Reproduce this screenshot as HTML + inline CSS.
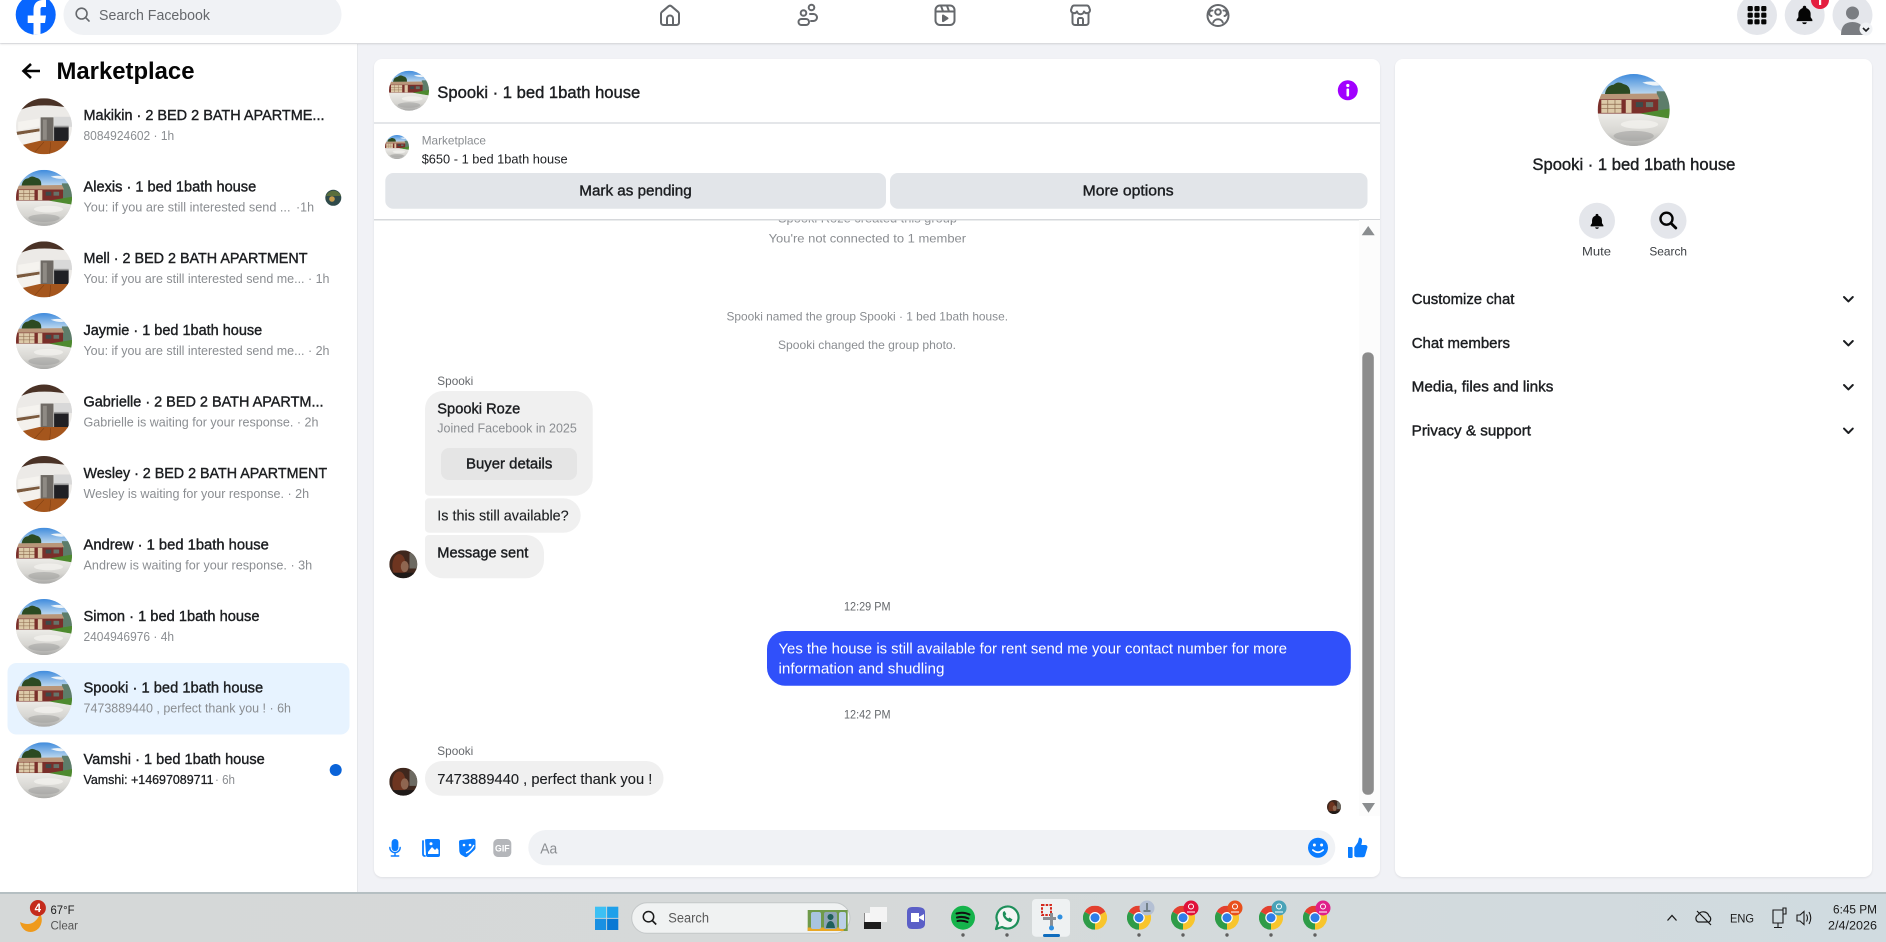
<!DOCTYPE html>
<html lang="en"><head><meta charset="utf-8"><title>Marketplace</title>
<style>
html,body{margin:0;padding:0;width:1886px;height:942px;overflow:hidden;background:#f1f2f6;font-family:"Liberation Sans",sans-serif}
.p{position:absolute;background:#fff}
svg{position:absolute;left:0;top:0;filter:blur(.3px)}
text{font-family:"Liberation Sans",sans-serif}
.t{font-size:15px;fill:#1c1e21;stroke:#1c1e21;stroke-width:.4px}
.s{font-size:13px;fill:#8a8d91}
.m{font-size:15px;fill:#1c1e21;stroke:#1c1e21;stroke-width:.12px}
.c{font-size:12px;fill:#8a8d91}
.ic{fill:none;stroke:#65686c;stroke-width:2;stroke-linecap:round;stroke-linejoin:round}
</style></head><body>
<div class="p" style="left:0;top:44px;width:357px;height:849px;border-right:1px solid #e6e8eb"></div>
<div class="p" style="left:374px;top:59px;width:1006px;height:818px;border-radius:8px;box-shadow:0 1px 2px rgba(0,0,0,.08)"></div>
<div class="p" style="left:1395px;top:59px;width:477px;height:818px;border-radius:8px;box-shadow:0 1px 2px rgba(0,0,0,.08)"></div>
<div class="p" style="left:0;top:0;width:1886px;height:43px;box-shadow:0 1px 2px rgba(0,0,0,.14)"></div>
<div style="position:absolute;left:0;top:892px;width:1886px;height:50px;box-sizing:border-box;border-top:2px solid #b5bfc2;background:linear-gradient(90deg,#d5d8d8,#d6d9d9 45%,#d0dbe0)"></div>
<svg width="1886" height="942" viewBox="0 0 1886 942">
<defs>
<clipPath id="cc"><circle cx="50" cy="50" r="50"/></clipPath>
<linearGradient id="sky" x1="0" y1="0" x2="0" y2="1"><stop offset="0" stop-color="#3f8bdd"/><stop offset="1" stop-color="#c6def0"/></linearGradient>
<linearGradient id="drv" x1="0" y1="0" x2="0" y2="1"><stop offset="0" stop-color="#ecebe7"/><stop offset=".6" stop-color="#d6d5d1"/><stop offset="1" stop-color="#a9a9a7"/></linearGradient>
<symbol id="house" viewBox="0 0 100 100"><g clip-path="url(#cc)">
<rect width="100" height="100" fill="url(#drv)"/>
<rect width="100" height="30" fill="url(#sky)"/>
<path d="M62 12q14-4 30 2q-12 5-30-2z" fill="#eef4f8"/>
<path d="M10 28q2-12 12-13q6-6 14-1q10 2 9 14z" fill="#2c4a22"/>
<rect x="82" y="24" width="18" height="30" fill="#5d7d6a"/>
<path d="M0 28 L82 27 L86 35 L0 35Z" fill="#b99679"/>
<rect x="0" y="35" width="84" height="20" fill="#7a2f2a"/>
<rect x="5" y="36" width="28" height="18" fill="#dcc9a8"/>
<path d="M5 42h28M5 48h28M14 36v18M24 36v18" stroke="#8d6a4e" stroke-width="1"/>
<rect x="39" y="36" width="8" height="18" fill="#dcc6a6"/>
<rect x="53" y="39" width="10" height="7" fill="#3d4a4a"/><rect x="67" y="39" width="10" height="7" fill="#66736a"/>
<path d="M58 55 L100 48 V62 L78 59Z" fill="#4e8a2f"/>
<path d="M0 55 L60 55 L100 62 V100 H0Z" fill="url(#drv)"/>
<ellipse cx="58" cy="70" rx="26" ry="6" fill="#f2f1ee" opacity=".8"/>
<ellipse cx="50" cy="86" rx="28" ry="7" fill="#9e9e9c" opacity=".55"/>
</g></symbol>
<symbol id="kit" viewBox="0 0 100 100"><g clip-path="url(#cc)">
<rect width="100" height="100" fill="#eceae7"/>
<path d="M0 0H100V18Q60 10 30 14Q10 18 0 26Z" fill="#4a3226"/>
<path d="M4 42 L42 36 V50 L4 58Z" fill="#f5f3ef"/>
<path d="M0 60 L42 54 V59 L0 66Z" fill="#7b5a3e"/>
<path d="M0 66 L42 59 V76 L0 84Z" fill="#f4f1ec"/>
<rect x="44" y="34" width="23" height="44" fill="#6f6a65"/><rect x="48" y="38" width="7" height="36" fill="#8f8a84"/>
<rect x="68" y="33" width="32" height="18" fill="#d8d8d8"/>
<rect x="68" y="51" width="26" height="27" fill="#202024"/><rect x="68" y="49" width="26" height="3" fill="#9a9a9a"/>
<path d="M0 86 L42 76 H100 V100 H0Z" fill="#a5561d"/>
<path d="M30 100L50 78M60 100L62 78" stroke="#7f3f12" stroke-width="1"/>
</g></symbol>
<symbol id="wom" viewBox="0 0 100 100"><g clip-path="url(#cc)">
<rect width="100" height="100" fill="#3f271d"/>
<ellipse cx="35" cy="55" rx="24" ry="42" fill="#6e3520"/>
<ellipse cx="55" cy="58" rx="14" ry="20" fill="#8f6650"/>
<rect x="72" y="10" width="28" height="55" fill="#6d6a62"/>
<rect y="80" width="100" height="20" fill="#1f1a18"/>
</g></symbol>
<symbol id="chrome" viewBox="0 0 24 24">
<path d="M12 12L1.6 6A12 12 0 0 1 22.400 6Z" fill="#e3402f"/><path d="M12 12L22.400 6A12 12 0 0 1 12 24Z" fill="#f8c52c"/><path d="M12 12L12 24A12 12 0 0 1 1.6 6Z" fill="#2e9c48"/>
<circle cx="12" cy="12" r="5.7" fill="#fff"/><circle cx="12" cy="12" r="4.5" fill="#2f7de8"/>
</symbol>
<symbol id="bell" viewBox="0 0 24 24"><path d="M12 2a2 2 0 0 0-2 2v.5A7 7 0 0 0 5 11v4l-2 3v1.500h18V18l-2-3v-4a7 7 0 0 0-5-6.500V4a2 2 0 0 0-2-2zM9.300 21a2.800 2.800 0 0 0 5.400 0z" fill="#050505"/></symbol>
</defs>

<!-- NAV -->
<circle cx="35.700" cy="14.700" r="20" fill="#0866ff"/>
<path d="M33.500 34.700V23H27.700V15.500H33.500V10C33.500 3 37.500 0 43 0h3V7H42.500C41 7 40.500 8 40.500 9.500V15.500H46L45 23H40.500V34.700Z" fill="#fff"/>
<rect x="63.500" y="-6" width="278" height="41" rx="20" fill="#f0f2f5"/>
<g fill="none" stroke="#65686c" stroke-width="1.600"><circle cx="81.600" cy="13.600" r="5.400"/><path d="M85.600 17.600L89 21" stroke-linecap="round"/></g>
<text x="99" y="20" font-size="14.500" fill="#65686c" textLength="111" lengthAdjust="spacingAndGlyphs">Search Facebook</text>
<g class="ic" transform="translate(658,3)"><path d="M3 10.500Q3 9.600 4 8.800L10.600 3.200Q12 2.200 13.400 3.200L20 8.800Q21 9.600 21 10.500V19.500A2.500 2.500 0 0 1 18.500 22H5.500A2.500 2.500 0 0 1 3 19.500ZM9 22V15.500A3 3 0 0 1 15 15.500V22"/></g>
<g class="ic" transform="translate(796,3)"><circle cx="7.500" cy="10" r="2.800"/><rect x="2.500" y="16" width="10.500" height="6" rx="3"/><circle cx="15.500" cy="4.500" r="2.800"/><path d="M14 11h3.500a3.500 3.500 0 0 1 0 7H15"/></g>
<g class="ic" transform="translate(933,3)"><rect x="2.500" y="2.500" width="19" height="19.500" rx="4.500"/><path d="M2.500 8.500h19M8 2.800l2 5.500M14 2.800l2 5.500"/><path d="M10 12.500l4.500 2.800-4.500 2.800z" fill="#65686c"/></g>
<g class="ic" transform="translate(1068.500,3)"><path d="M4 10V19.500A2.500 2.500 0 0 0 6.500 22h11a2.500 2.500 0 0 0 2.500-2.500V10"/><path d="M2.500 7L3.500 4A2.500 2.500 0 0 1 6 2.500H18A2.500 2.500 0 0 1 20.500 4L21.500 7A3.200 3.200 0 0 1 15.500 8.500 3.600 3.600 0 0 1 8.500 8.500 3.200 3.200 0 0 1 2.500 7Z"/><path d="M9.500 22V16.500A1.500 1.500 0 0 1 11 15h2A1.500 1.500 0 0 1 14.500 16.500V22"/></g>
<g class="ic" transform="translate(1206,3)"><circle cx="12" cy="12.500" r="10.500"/><circle cx="12" cy="9" r="2.800"/><path d="M7.200 19.500A5 4.500 0 0 1 16.800 19.500"/><path d="M6.500 7.500A2.300 2.300 0 1 0 5.500 13M17.500 7.500A2.300 2.300 0 1 1 18.500 13"/></g>
<circle cx="1757" cy="15" r="20" fill="#e4e6eb"/><circle cx="1804.700" cy="15" r="20" fill="#e4e6eb"/><circle cx="1852.500" cy="15" r="20" fill="#e4e6eb"/>
<g fill="#050505"><rect x="1747.600" y="6" width="5.200" height="5.200" rx="1.200"/><rect x="1754.400" y="6" width="5.200" height="5.200" rx="1.200"/><rect x="1761.200" y="6" width="5.200" height="5.200" rx="1.200"/><rect x="1747.600" y="12.600" width="5.200" height="5.200" rx="1.200"/><rect x="1754.400" y="12.600" width="5.200" height="5.200" rx="1.200"/><rect x="1761.200" y="12.600" width="5.200" height="5.200" rx="1.200"/><rect x="1747.600" y="19.200" width="5.200" height="5.200" rx="1.200"/><rect x="1754.400" y="19.200" width="5.200" height="5.200" rx="1.200"/><rect x="1761.200" y="19.200" width="5.200" height="5.200" rx="1.200"/></g>
<use href="#bell" x="1794" y="4" width="21" height="21"/>
<circle cx="1820" cy="0" r="9" fill="#e41e3f"/><rect x="1819" y="0" width="2.200" height="5" fill="#fff"/>
<circle cx="1852.500" cy="13" r="6.500" fill="#7a7d82"/><path d="M1841 35Q1841 22 1852.500 22Q1864 22 1864 35Z" fill="#7a7d82"/>
<circle cx="1866" cy="29" r="6.500" fill="#f0f2f5"/><path d="M1863 28l3 3 3-3" fill="none" stroke="#1c1e21" stroke-width="1.600"/>

<!-- SIDEBAR -->
<path d="M40 71H24M31 64l-7.500 7 7.500 7" fill="none" stroke="#050505" stroke-width="2.600"/>
<text x="56.500" y="79" font-size="24" font-weight="700" fill="#050505" textLength="138" lengthAdjust="spacingAndGlyphs">Marketplace</text>
<rect x="7.500" y="663" width="342" height="71.500" rx="9" fill="#e7f3ff"/>

<use href="#kit" x="16" y="98.300" width="56" height="56"/>
<text class="t" x="83.500" y="120" textLength="241" lengthAdjust="spacingAndGlyphs">Makikin · 2 BED 2 BATH APARTME...</text>
<text class="s" x="83.500" y="140" textLength="90.700" lengthAdjust="spacingAndGlyphs">8084924602 · 1h</text>

<use href="#house" x="16" y="169.900" width="56" height="56"/>
<text class="t" x="83.500" y="191.700" textLength="172.700" lengthAdjust="spacingAndGlyphs">Alexis · 1 bed 1bath house</text>
<text class="s" x="83.500" y="211.700" textLength="207" lengthAdjust="spacingAndGlyphs">You: if you are still interested send ...</text>
<text class="s" x="296" y="211.700" textLength="18" lengthAdjust="spacingAndGlyphs">·1h</text>
<circle cx="333.300" cy="197.800" r="8" fill="#2f4a4a"/><path d="M326 196a8 8 0 0 1 15 0z" fill="#5a6e3c"/><circle cx="332" cy="199" r="2.800" fill="#c69a4c"/>

<use href="#kit" x="16" y="241.400" width="56" height="56"/>
<text class="t" x="83.500" y="263.200" textLength="224" lengthAdjust="spacingAndGlyphs">Mell · 2 BED 2 BATH APARTMENT</text>
<text class="s" x="83.500" y="283.200" textLength="246" lengthAdjust="spacingAndGlyphs">You: if you are still interested send me... · 1h</text>

<use href="#house" x="16" y="313" width="56" height="56"/>
<text class="t" x="83.500" y="334.800" textLength="178.700" lengthAdjust="spacingAndGlyphs">Jaymie · 1 bed 1bath house</text>
<text class="s" x="83.500" y="354.800" textLength="246" lengthAdjust="spacingAndGlyphs">You: if you are still interested send me... · 2h</text>

<use href="#kit" x="16" y="384.500" width="56" height="56"/>
<text class="t" x="83.500" y="406.300" textLength="240" lengthAdjust="spacingAndGlyphs">Gabrielle · 2 BED 2 BATH APARTM...</text>
<text class="s" x="83.500" y="426.300" textLength="235" lengthAdjust="spacingAndGlyphs">Gabrielle is waiting for your response. · 2h</text>

<use href="#kit" x="16" y="456" width="56" height="56"/>
<text class="t" x="83.500" y="477.800" textLength="243.600" lengthAdjust="spacingAndGlyphs">Wesley · 2 BED 2 BATH APARTMENT</text>
<text class="s" x="83.500" y="497.800" textLength="225.600" lengthAdjust="spacingAndGlyphs">Wesley is waiting for your response. · 2h</text>

<use href="#house" x="16" y="527.700" width="56" height="56"/>
<text class="t" x="83.500" y="549.400" textLength="185.300" lengthAdjust="spacingAndGlyphs">Andrew · 1 bed 1bath house</text>
<text class="s" x="83.500" y="569.400" textLength="228.700" lengthAdjust="spacingAndGlyphs">Andrew is waiting for your response. · 3h</text>

<use href="#house" x="16" y="599" width="56" height="56"/>
<text class="t" x="83.500" y="621" textLength="176" lengthAdjust="spacingAndGlyphs">Simon · 1 bed 1bath house</text>
<text class="s" x="83.500" y="641" textLength="90.500" lengthAdjust="spacingAndGlyphs">2404946976 · 4h</text>

<use href="#house" x="16" y="670.700" width="56" height="56"/>
<text class="t" x="83.500" y="692.500" textLength="179.700" lengthAdjust="spacingAndGlyphs">Spooki · 1 bed 1bath house</text>
<text class="s" x="83.500" y="712.500" textLength="207.500" lengthAdjust="spacingAndGlyphs">7473889440 , perfect thank you ! · 6h</text>

<use href="#house" x="16" y="742.300" width="56" height="56"/>
<text class="t" x="83.500" y="764" textLength="181.300" lengthAdjust="spacingAndGlyphs">Vamshi · 1 bed 1bath house</text>
<text x="83.500" y="784" font-size="13" fill="#1c1e21" stroke="#1c1e21" stroke-width=".3" textLength="130" lengthAdjust="spacingAndGlyphs">Vamshi: +14697089711</text>
<text class="s" x="215" y="784" textLength="20" lengthAdjust="spacingAndGlyphs">· 6h</text>
<circle cx="335.700" cy="770" r="6" fill="#0a63d8"/>

<!-- CHAT -->
<text class="c" x="778" y="222.500" textLength="179" lengthAdjust="spacingAndGlyphs">Spooki Roze created this group</text>
<rect x="374" y="124" width="1006" height="95" fill="#fff"/>
<rect x="374" y="219" width="1006" height="1.500" fill="#d6d8db"/>
<rect x="374" y="122" width="1006" height="2" fill="#e4e6e9"/>
<use href="#house" x="389" y="70.700" width="40" height="40"/>
<text x="437.300" y="98" font-size="16.500" fill="#1c1e21" stroke="#1c1e21" stroke-width=".4" textLength="203" lengthAdjust="spacingAndGlyphs">Spooki · 1 bed 1bath house</text>
<circle cx="1347.800" cy="90.300" r="10" fill="#a100ff"/><circle cx="1347.800" cy="85.500" r="1.600" fill="#fff"/><rect x="1346.500" y="88.500" width="2.600" height="8" rx="1" fill="#fff"/>
<use href="#house" x="385" y="135" width="24" height="24"/>
<text x="421.700" y="144.300" font-size="12" fill="#8a8d91" textLength="64.300" lengthAdjust="spacingAndGlyphs">Marketplace</text>
<text x="421.700" y="163.300" font-size="13" fill="#1c1e21" textLength="146" lengthAdjust="spacingAndGlyphs">$650 - 1 bed 1bath house</text>
<rect x="385.300" y="173" width="500.700" height="35.700" rx="8" fill="#e2e5e9"/>
<rect x="890" y="173" width="477.500" height="35.700" rx="8" fill="#e2e5e9"/>
<text class="t" x="579.300" y="195.700" textLength="112.400" lengthAdjust="spacingAndGlyphs">Mark as pending</text>
<text class="t" x="1082.600" y="195.700" textLength="91" lengthAdjust="spacingAndGlyphs">More options</text>

<text class="c" x="768.600" y="242.700" textLength="197.500" lengthAdjust="spacingAndGlyphs">You're not connected to 1 member</text>
<text class="c" x="726.500" y="320.500" textLength="281.500" lengthAdjust="spacingAndGlyphs">Spooki named the group Spooki · 1 bed 1bath house.</text>
<text class="c" x="778" y="349" textLength="178" lengthAdjust="spacingAndGlyphs">Spooki changed the group photo.</text>

<rect x="1359" y="220" width="21" height="596" fill="#fcfcfc"/>
<path d="M1368.200 226L1374.700 235.300H1361.700Z" fill="#8a8d8f"/>
<rect x="1362.300" y="352.400" width="11.500" height="442.300" rx="5" fill="#8c8c8c"/>
<path d="M1368.500 812.700L1362 803H1375Z" fill="#8a8d8f"/>

<text x="437.300" y="385" font-size="12" fill="#65686c" textLength="36" lengthAdjust="spacingAndGlyphs">Spooki</text>
<path d="M443 391H575A18 18 0 0 1 592.700 409V478A18 18 0 0 1 575 495.700H429A4 4 0 0 1 425 491.700V409A18 18 0 0 1 443 391Z" fill="#f0f0f0"/>
<text class="t" x="437.300" y="413.300" textLength="83" lengthAdjust="spacingAndGlyphs">Spooki Roze</text>
<text x="437.300" y="432.300" font-size="13" fill="#8a8d91" textLength="139.500" lengthAdjust="spacingAndGlyphs">Joined Facebook in 2025</text>
<rect x="441" y="448" width="136" height="32" rx="8" fill="#e5e5e5"/>
<text class="t" x="466" y="468.700" textLength="86.300" lengthAdjust="spacingAndGlyphs">Buyer details</text>
<path d="M429 498.300H563.500A17.200 17.200 0 0 1 563.500 532.700H429A4 4 0 0 1 425 528.700V502.300A4 4 0 0 1 429 498.300Z" fill="#f0f0f0"/>
<text class="m" x="437.300" y="520.700" textLength="131.400" lengthAdjust="spacingAndGlyphs">Is this still available?</text>
<path d="M429 535H526A18 18 0 0 1 544 553V560.300A18 18 0 0 1 526 578.300H443A18 18 0 0 1 425 560.300V539A4 4 0 0 1 429 535Z" fill="#f0f0f0"/>
<text class="t" x="437.300" y="557.300" textLength="91" lengthAdjust="spacingAndGlyphs">Message sent</text>
<use href="#wom" x="389.300" y="550.300" width="28" height="28"/>

<text x="844" y="610.700" font-size="12" fill="#65686c" textLength="46.500" lengthAdjust="spacingAndGlyphs">12:29 PM</text>
<rect x="767" y="631" width="583.800" height="54.700" rx="18" fill="#3050fa"/>
<text x="778.500" y="653.300" font-size="15" fill="#fff" textLength="508.500" lengthAdjust="spacingAndGlyphs">Yes the house is still available for rent send me your contact number for more</text>
<text x="778.500" y="673.300" font-size="15" fill="#fff" textLength="166" lengthAdjust="spacingAndGlyphs">information and shudling</text>
<text x="844" y="718.300" font-size="12" fill="#65686c" textLength="46.500" lengthAdjust="spacingAndGlyphs">12:42 PM</text>
<text x="437.300" y="755" font-size="12" fill="#65686c" textLength="36" lengthAdjust="spacingAndGlyphs">Spooki</text>
<rect x="425" y="761" width="238.500" height="34.700" rx="17.300" fill="#f0f0f0"/>
<text class="m" x="437.300" y="784" textLength="215" lengthAdjust="spacingAndGlyphs">7473889440 , perfect thank you !</text>
<use href="#wom" x="389.300" y="767.700" width="28" height="28"/>
<use href="#wom" x="1327" y="800" width="14" height="14"/>

<!-- COMPOSER -->
<path d="M395 839a3.400 3.400 0 0 0-3.400 3.400v5.400a3.400 3.400 0 0 0 6.800 0v-5.400A3.400 3.400 0 0 0 395 839z" fill="#0a7cff"/>
<path d="M389.800 847.500a5.200 5.200 0 0 0 10.400 0M395 852.700v3M391.300 856h7.400" fill="none" stroke="#0a7cff" stroke-width="1.400" stroke-linecap="round"/>
<path d="M423 841v13q0 2 2 2" fill="none" stroke="#0a7cff" stroke-width="1.800" stroke-linecap="round"/>
<path d="M425 839.500L427 839H438a2 2 0 0 1 2 2V855a2 2 0 0 1-2 2H428a2 2 0 0 1-2-2Z" fill="#0a7cff"/>
<path d="M428 852l4-5 3 3 2-2 1.500 2V854H428Z" fill="#fff"/><circle cx="431" cy="843.800" r="1.500" fill="#fff"/>
<path d="M459 842Q459 840 461 840L473 838.800Q475.500 838.600 475.500 841V848Q475.500 849 474.500 850L467.500 856.500Q466 857.500 465 857L461.500 855Q459.500 853.500 459.300 851Z" fill="#0a7cff"/>
<circle cx="464" cy="845" r="1.300" fill="#fff"/><circle cx="470" cy="845" r="1.300" fill="#fff"/><path d="M466 853q5-2 8-8" fill="none" stroke="#fff" stroke-width="1.400"/>
<rect x="493.300" y="839" width="18" height="18" rx="4.500" fill="#b4b6ba"/>
<text x="495" y="851.500" font-size="9" font-weight="700" fill="#fff" textLength="14.600" lengthAdjust="spacingAndGlyphs">GIF</text>
<rect x="528.300" y="830" width="807" height="35.300" rx="17.600" fill="#f0f2f5"/>
<text x="540.300" y="853.300" font-size="15" fill="#8a8d91" textLength="17" lengthAdjust="spacingAndGlyphs">Aa</text>
<circle cx="1318" cy="847.700" r="10" fill="#0a7cff"/><circle cx="1314.400" cy="845" r="1.500" fill="#fff"/><circle cx="1321.600" cy="845" r="1.500" fill="#fff"/><path d="M1312.800 850q5.200 4.500 10.400 0" fill="none" stroke="#fff" stroke-width="1.600" stroke-linecap="round"/>
<path d="M1348 847h3.600a1 1 0 0 1 1 1v9a1 1 0 0 1-1 1H1349a1 1 0 0 1-1-1ZM1354.300 847.500l3.600-5.200 1-4q.4-1 1.400-.6 2.400 1 1.600 4.600l-.6 2.700h4.200a2 2 0 0 1 1.900 2.600l-2.400 8.200a2 2 0 0 1-1.900 1.400h-6.300a2.600 2.600 0 0 1-2.500-1.200Z" fill="#0a7cff"/>

<!-- RIGHT PANEL -->
<use href="#house" x="1597.700" y="74" width="72" height="72"/>
<text x="1532.400" y="170" font-size="16.500" fill="#1c1e21" stroke="#1c1e21" stroke-width=".4" textLength="203" lengthAdjust="spacingAndGlyphs">Spooki · 1 bed 1bath house</text>
<circle cx="1597" cy="220.700" r="18" fill="#e4e6eb"/><circle cx="1668.500" cy="220.700" r="18" fill="#e4e6eb"/>
<use href="#bell" x="1588.500" y="211.500" width="17" height="19"/>
<circle cx="1666.500" cy="218.700" r="6" fill="none" stroke="#050505" stroke-width="2.400"/><path d="M1671 223.200l4.800 4.800" stroke="#050505" stroke-width="2.800" stroke-linecap="round"/>
<text x="1582" y="255.700" font-size="12" fill="#3e4145" textLength="29" lengthAdjust="spacingAndGlyphs">Mute</text>
<text x="1649.400" y="255.700" font-size="12" fill="#3e4145" textLength="37.600" lengthAdjust="spacingAndGlyphs">Search</text>
<text class="t" x="1411.700" y="304" textLength="102.700" lengthAdjust="spacingAndGlyphs">Customize chat</text>
<text class="t" x="1411.700" y="348" textLength="98.300" lengthAdjust="spacingAndGlyphs">Chat members</text>
<text class="t" x="1411.700" y="391.700" textLength="141.700" lengthAdjust="spacingAndGlyphs">Media, files and links</text>
<text class="t" x="1411.700" y="435.700" textLength="119.300" lengthAdjust="spacingAndGlyphs">Privacy &amp; support</text>
<g fill="none" stroke="#1c1e21" stroke-width="2" stroke-linecap="round" stroke-linejoin="round"><path d="M1844 297l4.400 4.400 4.400-4.400"/><path d="M1844 341l4.400 4.400 4.400-4.400"/><path d="M1844 385l4.400 4.400 4.400-4.400"/><path d="M1844 428.600l4.400 4.400 4.400-4.400"/></g>

<!-- TASKBAR -->
<path d="M20 922q8 4 14 0 5-4 6-9 4 8-1 15-6 6-13 3-5-3-6-9z" fill="#ef9a1c"/>
<circle cx="37.900" cy="908" r="8" fill="#c42b1c"/>
<text x="34.600" y="912" font-size="11.500" font-weight="700" fill="#fff">4</text>
<text x="50.500" y="914" font-size="11.500" fill="#1a1a1a" textLength="24" lengthAdjust="spacingAndGlyphs">67°F</text>
<text x="50.500" y="929.300" font-size="11.500" fill="#555" textLength="27.500" lengthAdjust="spacingAndGlyphs">Clear</text>
<g><rect x="595" y="906.700" width="11.200" height="11.200" fill="#3cc0f4"/><rect x="607.100" y="906.700" width="11.200" height="11.200" fill="#1ea0ea"/><rect x="595" y="918.800" width="11.200" height="11.200" fill="#1a90e2"/><rect x="607.100" y="918.800" width="11.200" height="11.200" fill="#0878d4"/></g>
<rect x="631.700" y="902.700" width="218.300" height="30.600" rx="15.300" fill="#f0f2f2" stroke="#c3c7c8"/>
<circle cx="648.500" cy="916.700" r="5.200" fill="none" stroke="#1a1a1a" stroke-width="1.500"/><path d="M652.200 920.500l4 4" stroke="#1a1a1a" stroke-width="1.600"/>
<text x="668.300" y="922.700" font-size="13.500" fill="#5a5a5a" textLength="40.700" lengthAdjust="spacingAndGlyphs">Search</text>
<rect x="807.700" y="910" width="40" height="21" fill="#6f9a4a"/><rect x="807.700" y="927.500" width="36" height="3.500" fill="#e8a826"/>
<rect x="811" y="912" width="10" height="17" rx="2" fill="#a9c4e0"/><rect x="824" y="912" width="13" height="17" rx="2" fill="#8ea4b4"/><path d="M826 928q1-7 4.500-7 3.500 0 4.500 7zM830.500 914a3 3 0 1 0 .01 0z" fill="#1f5f5a"/><rect x="839" y="912" width="7" height="17" rx="2" fill="#bcd0e6"/>
<rect x="864" y="913" width="17" height="16" fill="#1c1c1c"/><rect x="870" y="907" width="17" height="15" fill="#f4f4f4"/><rect x="864.500" y="913" width="5.500" height="9" fill="#f8f8f8"/>
<path d="M907 912q0-5 5-5h5q8 0 8 5v12q0 5-8 5h-5q-5 0-5-5z" fill="#5b5fc7"/><path d="M911 913h8v9h-8zM919 917l5-3v7l-5-3z" fill="#fff"/>
<circle cx="963" cy="917.700" r="12" fill="#15b34b"/><g fill="none" stroke="#111" stroke-width="2" stroke-linecap="round"><path d="M956.500 913.500q7-2 13 1"/><path d="M957 917.500q6-1.500 11.500 1"/><path d="M957.500 921q5-1 10 1"/></g>
<circle cx="963" cy="935" r="1.700" fill="#606060"/>
<path d="M996 929l2-6a11 11 0 1 1 4 4z" fill="#f3f6f5" stroke="#1d8f5a" stroke-width="2.200" stroke-linejoin="round"/><path d="M1003 912q-1 4 2 7t6 3l1.500-2.500-3-2-1.200 1q-2-1-3-3l1-1.500-1.700-3z" fill="#1d8f5a"/>
<circle cx="1007" cy="935" r="1.700" fill="#606060"/>
<rect x="1032" y="899" width="38" height="37.700" rx="4" fill="#eef1f2"/>
<path d="M1042 905h9v10h-9z" fill="none" stroke="#d42a1e" stroke-width="2" stroke-dasharray="2.500 1.200"/>
<rect x="1043" y="917" width="13" height="3" fill="#8a8f94"/><rect x="1050" y="913" width="3" height="15" fill="#8a8f94"/><circle cx="1060" cy="917" r="2.500" fill="#2f8fe0"/><circle cx="1051.500" cy="928" r="2.500" fill="#2f8fe0"/>
<rect x="1043" y="934" width="17" height="3" rx="1.500" fill="#0f6cbd"/>
<use href="#chrome" x="1083" y="905.700" width="24" height="24"/>
<use href="#chrome" x="1127" y="905.700" width="24" height="24"/><circle cx="1147" cy="908" r="7.500" fill="#b4c0d4"/><path d="M1147 903v7M1143.500 911h7" stroke="#4a5a5a" stroke-width="1.200"/>
<use href="#chrome" x="1171" y="905.700" width="24" height="24"/><circle cx="1191" cy="908" r="7.500" fill="#e0103a"/><circle cx="1191" cy="906.500" r="2.500" fill="none" stroke="#fff"/><path d="M1187 912h8" stroke="#fff"/>
<use href="#chrome" x="1215" y="905.700" width="24" height="24"/><circle cx="1235" cy="908" r="7.500" fill="#e8501c"/><circle cx="1235" cy="906.500" r="2.500" fill="none" stroke="#fff"/><path d="M1231 912h8" stroke="#fff"/>
<use href="#chrome" x="1259" y="905.700" width="24" height="24"/><circle cx="1279" cy="908" r="7.500" fill="#4aa3b8"/><circle cx="1279" cy="906.500" r="2.500" fill="none" stroke="#fff"/><path d="M1275 912h8" stroke="#fff"/>
<use href="#chrome" x="1303" y="905.700" width="24" height="24"/><circle cx="1323" cy="908" r="7.500" fill="#e0208a"/><circle cx="1323" cy="906.500" r="2.500" fill="none" stroke="#fff"/><path d="M1319 912h8" stroke="#fff"/>
<g fill="#606060"><circle cx="1139" cy="935" r="1.700"/><circle cx="1183" cy="935" r="1.700"/><circle cx="1227" cy="935" r="1.700"/><circle cx="1271" cy="935" r="1.700"/><circle cx="1315" cy="935" r="1.700"/></g>
<path d="M1667.500 920.500l4.500-5 4.500 5" fill="none" stroke="#1a1a1a" stroke-width="1.300"/>
<path d="M1698 922a4 4 0 0 1 0-7 6 6 0 0 1 11 1 3.500 3.500 0 0 1 0 6zM1697 911l14 14" fill="none" stroke="#1a1a1a" stroke-width="1.200"/>
<text x="1730" y="922.700" font-size="11.500" fill="#1a1a1a" textLength="24" lengthAdjust="spacingAndGlyphs">ENG</text>
<path d="M1773 910h10v13h-10zM1778 923v4M1774 927.500h8M1783 910v-2h3v6h-3" fill="none" stroke="#1a1a1a" stroke-width="1.100"/>
<path d="M1797 915h3l4-3.500v13l-4-3.500h-3zM1806.500 914.500q2 3.500 0 7M1809 912q3.500 6 0 12" fill="none" stroke="#1a1a1a" stroke-width="1.100"/>
<text x="1833" y="913.300" font-size="11.500" fill="#1a1a1a" textLength="44" lengthAdjust="spacingAndGlyphs">6:45 PM</text>
<text x="1828" y="929.300" font-size="11.500" fill="#1a1a1a" textLength="49" lengthAdjust="spacingAndGlyphs">2/4/2026</text>
</svg>
</body></html>
